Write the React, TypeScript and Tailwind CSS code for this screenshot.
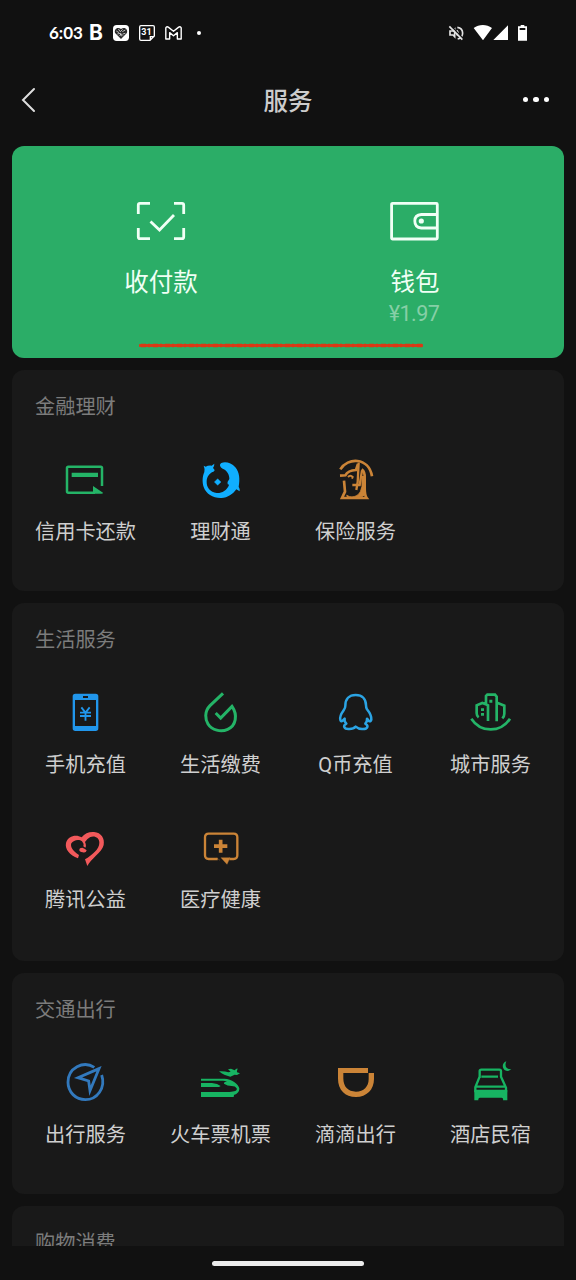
import type { ReactNode } from "react";

type Service = { label: string; viewBox: string; color: string; icon: ReactNode };

const finance: Service[] = [
  {
    label: "信用卡还款",
    viewBox: "123 48 144 144",
    color: "text-[#24b467]",
    icon: (
      <>
        <path d="M246 138V84q0-4-4-4H145q-4 0-4 4v70q0 4 4 4h80" fill="none" stroke="currentColor" strokeWidth="7.500" />
        <path d="M155 98h79v13h-79zM219 138l30 20q0 3-4 3h-26z" fill="currentColor" />
      </>
    ),
  },
  {
    label: "理财通",
    viewBox: "528 48 144 144",
    color: "text-[#10aeff]",
    icon: (
      <>
        <path
          d="M583 71L575 77Q564 76 557 80L551 77Q555 86 553 96C546 111 547 129 551 141C558 162 580 175 604 174C624 173 638 163 649 148L659 154Q660 146 656 140C660 120 659 97 646 82C634 68 616 64 604 69C596 74 601 83 610 87C622 93 628 105 628 117Q621 125 623 133Q627 134 627 135C620 152 605 160 590 159C571 157 559 143 560 124C560 111 568 99 580 95Q588 92 579 84Q583 80 583 71z"
          fill="currentColor"
        />
        <path d="M593 116L603 126L593 136L583 126z" fill="currentColor" stroke="currentColor" strokeWidth="1" />
      </>
    ),
  },
  {
    label: "保险服务",
    viewBox: "33 18 144 144",
    color: "text-[#cb8437]",
    icon: (
      <g fill="none" stroke="currentColor">
        <path d="M61 58C82 22 146 20 156 79" strokeWidth="8" />
        <path d="M60 77L76 76Q84 61 108 60L114 42" strokeWidth="8" />
        <path d="M116 38L113 96L109 120" strokeWidth="7" />
        <path d="M97 105H119L126 62" strokeWidth="7" />
        <path d="M125 58Q136 66 134 86V114Q134 136 140 144H66L75 125L72 92" strokeWidth="8" />
        <path d="M129 78V138" strokeWidth="9" />
        <path d="M80 135Q95 147 114 134Q122 127 125 112L128 140L82 143z" fill="currentColor" strokeWidth="2" />
        <path d="M84 81Q91 73 98 81L96 86" strokeWidth="6" />
      </g>
    ),
  },
];

const life: Service[] = [
  {
    label: "手机充值",
    viewBox: "123 27 144 144",
    color: "text-[#2196eb]",
    icon: (
      <>
        <path
          fillRule="evenodd"
          d="M166 41H227Q235 41 235 49V145Q235 153 227 153H166Q158 153 158 145V49Q158 41 166 41zM165 60V138H228V60zM189 48V54H204V48z"
          fill="currentColor"
        />
        <path d="M184 82L196.500 98L209 82M180 98H213M180 108H213M196.500 98V122" fill="none" stroke="currentColor" strokeWidth="5.500" />
      </>
    ),
  },
  {
    label: "生活缴费",
    viewBox: "528 27 144 144",
    color: "text-[#24b467]",
    icon: (
      <path
        d="M609 40L570 77C552 95 556 119 564 132C576 151 603 157 623 148C648 137 654 105 636 79L602 114L587 99"
        fill="none"
        stroke="currentColor"
        strokeWidth="9"
      />
    ),
  },
  {
    label: "Q币充值",
    viewBox: "123 27 144 144",
    color: "text-[#2ba4e4]",
    icon: (
      <path
        d="M197 45C177 45 166 58 166 77Q166 84 161 91C153 102 149 113 151 120Q153 127 158 122L164 116Q162 124 169 131C157 138 163 147 175 147Q190 148 197 140Q206 148 219 147C233 147 237 138 226 131Q232 124 231 116L236 122Q242 127 244 119C245 109 239 98 231 88Q228 83 228 76C228 57 217 45 197 45z"
        fill="none"
        stroke="currentColor"
        strokeWidth="7.500"
        strokeLinejoin="round"
      />
    ),
  },
  {
    label: "城市服务",
    viewBox: "528 27 144 144",
    color: "text-[#24b467]",
    icon: (
      <>
        <path d="M544 116C572 159 632 159 660 116" fill="none" stroke="currentColor" strokeWidth="8" />
        <path
          d="M566 112Q560 108 560 100V76L577 69L588 73V48L592 44H615L620 50V124M594 123V76L588 73M620 74L624 69L643 77V101Q643 109 637 115"
          fill="none"
          stroke="currentColor"
          strokeWidth="8"
        />
        <path d="M598 59h9v9h-9zM573 85h9v8h-9zM573 99h9v8h-9z" fill="currentColor" />
      </>
    ),
  },
  {
    label: "腾讯公益",
    viewBox: "123 12 144 144",
    color: "text-[#f2595b]",
    icon: (
      <>
        <path
          d="M202 138L195 118C217 104 238 88 238 68C238 52 223 46 211 51Q202 55 195 66Q200 78 196 83L190 79Q192 70 186 64C177 56 160 60 154 70C150 80 159 94 177 105L174 115C149 106 134 87 138 69C144 47 169 42 185 52C194 40 207 35 222 36C244 38 255 55 251 75C246 97 212 117 202 138z"
          fill="currentColor"
        />
        <path d="M178 90Q178 83 187 83Q194 85 200 91Q198 100 188 97Q178 96 178 90z" fill="currentColor" />
      </>
    ),
  },
  {
    label: "医疗健康",
    viewBox: "528 12 144 144",
    color: "text-[#cb8437]",
    icon: (
      <>
        <path d="M593 117H566Q555 117 555 106V52Q555 41 566 41H641Q652 41 652 52V106Q652 117 641 117H628" fill="none" stroke="currentColor" strokeWidth="7" />
        <path d="M602 59V98M582 78.500H622" stroke="currentColor" strokeWidth="11" />
        <path d="M590 114L600 121M603 113H630L621 133z" fill="currentColor" stroke="currentColor" strokeWidth="1" />
      </>
    ),
  },
];

const travel: Service[] = [
  {
    label: "出行服务",
    viewBox: "123 27 144 144",
    color: "text-[#3279bd]",
    icon: (
      <>
        <path d="M223 52C190 31 144 54 144 97C144 126 167 149 196 149C231 149 258 114 245 75" fill="none" stroke="currentColor" strokeWidth="8.500" />
        <path d="M237 56L174 83L206 93L210 122z" fill="none" stroke="currentColor" strokeWidth="8.500" />
      </>
    ),
  },
  {
    label: "火车票机票",
    viewBox: "528 27 144 144",
    color: "text-[#17b462]",
    icon: (
      <>
        <path
          d="M597 64Q614 63 625 67L632 65L624 58L633 56L644 61Q650 53 653 56Q650 63 651 67L660 70L651 75L644 74L631 80Q612 77 597 64z"
          fill="currentColor"
        />
        <path
          d="M543 86H613C635 87 655 101 658 115C658 127 650 133 642 135L641 141H543V126H628C644 125 652 123 650 115Q646 108 635 108Q622 108 612 101Q611 96 621 94L609 92H543z"
          fill="currentColor"
        />
        <path d="M543 99H576Q593 101 602 108L597 111H543z" fill="currentColor" />
      </>
    ),
  },
  {
    label: "滴滴出行",
    viewBox: "123 27 144 144",
    color: "text-[#cb8437]",
    icon: (
      <path
        d="M144 54H234V69H160V85C160 110 174 125 198 125C221 125 236 110 236 87V69H252V87C252 119 230 141 198 141C165 141 144 119 144 86z"
        fill="currentColor"
      />
    ),
  },
  {
    label: "酒店民宿",
    viewBox: "528 27 144 144",
    color: "text-[#17b462]",
    icon: (
      <>
        <path d="M574 80H624M569 84L569 63Q569 59 574 59H628Q633 59 633 64V80L648 113V123H556V112L569 80M556 110H648" fill="none" stroke="currentColor" strokeWidth="7" />
        <path d="M553 120H652V151H639Q641 143 634 143H570Q564 143 565 151H553z" fill="currentColor" />
        <path d="M649 34C636 38 635 54 645 61Q655 66 664 58C648 59 643 48 649 34z" fill="currentColor" />
      </>
    ),
  },
];

function Section({ title, services, height }: { title: string; services: Service[]; height: string }) {
  return (
    <section className={`shrink-0 rounded-xl bg-[#191919] ${height}`}>
      <h2 className="flex h-[72px] items-center pt-0.5 pl-[23px] text-[20.2px] text-[#7c7c7c]">{title}</h2>
      <div className="grid grid-cols-4 px-1.5">
        {services.map((s) => (
          <button key={s.label} className="flex h-[135px] flex-col items-center pt-3.5">
            <svg viewBox={s.viewBox} className={`mr-px size-12 shrink-0 ${s.color}`}>
              {s.icon}
            </svg>
            <span className="mt-3.5 text-[20.2px] leading-7 whitespace-nowrap text-[#cfcfcf]">{s.label}</span>
          </button>
        ))}
      </div>
    </section>
  );
}

function StatusBar() {
  return (
    <div className="flex h-[66px] shrink-0 items-center justify-between pr-[48px] pl-[49px] text-white">
      <div className="flex items-center">
        <span className="w-[40px] font-[Lato] text-[17px] leading-6 font-bold whitespace-nowrap">6:03</span>
        <span className="w-[24px] font-[Inter] text-[21px] leading-6 font-bold">B</span>
        <svg viewBox="0 0 48 48" className="size-4">
          <rect width="48" height="48" rx="11" fill="white" />
          <path d="M24 42L7 25C1 14 13 3 24 12C35 3 47 14 41 25z" fill="#292929" />
          <path d="M10 18l8 5M16 12l6 8 7-7M28 20l9-5M13 27l9-2 4 9M29 27l8-2M20 33l4-7 6 6" stroke="white" strokeWidth="2" fill="none" />
        </svg>
        <span className="relative ml-2.5 flex size-4 items-center justify-center">
          <svg viewBox="0 0 48 48" className="absolute inset-0 size-4">
            <path d="M6 2H42Q46 2 46 6V33L33 46H6Q2 46 2 42V6Q2 2 6 2zM34 46V35H46" fill="none" stroke="white" strokeWidth="4" />
          </svg>
          <span className="pr-px pb-px font-[Roboto] text-[9px] leading-none font-bold">31</span>
        </span>
        <svg viewBox="0 0 48 40" className="ml-[10px] h-[14px] w-[17px]">
          <path
            d="M2 5Q5 0 10 4L24 15L38 4Q43 0 46 5V37H35V19L24 28L13 19V37H2z"
            fill="none"
            stroke="white"
            strokeWidth="4"
            strokeLinejoin="round"
          />
        </svg>
        <span className="ml-[15px] size-1 rounded-full bg-white" />
      </div>
      <svg viewBox="480 72 240 54" className="h-[18px] w-20" fill="white">
        <path d="M486 93H495L500 88V110L495 105H486zM506 91Q514 99 506 106M508 82C529 85 529 112 509 117" fill="none" stroke="#e4e4e4" strokeWidth="5" />
        <path d="M487 76L526 116" stroke="#111" strokeWidth="4" />
        <path d="M484 79L523 119" stroke="#e4e4e4" strokeWidth="5" />
        <path d="M557 84C573 72 596 72 612 84L585 121zM660 76V120H616z" />
        <path fillRule="evenodd" d="M698 75H709V79H717V122H690V79H698zM695 84V90H712V84z" />
      </svg>
    </div>
  );
}

export default function App() {
  return (
    <div className="flex h-[1280px] w-[576px] flex-col overflow-hidden bg-[#111111] font-[Roboto,'Noto_Sans_CJK_SC',sans-serif]">
      <StatusBar />
      <header className="grid h-20 shrink-0 grid-cols-3 items-center px-[20px] pb-[13px]">
        <svg viewBox="0 0 16 26" className="h-[26px] w-4">
          <path d="M14 2L3 13L14 24" fill="none" stroke="#dedede" strokeWidth="2" strokeLinecap="round" />
        </svg>
        <h1 className="pt-[5px] text-center text-[24.5px] leading-8 font-medium text-[#cccccc]">服务</h1>
        <div className="flex justify-end gap-[5px] pr-[7px]">
          <span className="size-[5.5px] rounded-full bg-white" />
          <span className="size-[5.5px] rounded-full bg-white" />
          <span className="size-[5.5px] rounded-full bg-white" />
        </div>
      </header>
      <main className="flex h-[1100px] shrink-0 flex-col gap-3 overflow-hidden px-3">
        <section className="flex h-[212px] shrink-0 flex-col rounded-xl bg-[#2bad67] text-[#f0fff5]">
          <div className="grid h-[194px] grid-cols-2 px-[22px]">
            <button className="flex flex-col items-center pt-[55px]">
              <svg viewBox="0 0 50 40" className="h-10 w-[50px]" fill="none" stroke="currentColor" strokeWidth="2.800">
                <path d="M2.300 13V4Q2.300 2.300 4 2.300H14M38 2.300H46Q47.700 2.300 47.700 4V13M2.300 27V36Q2.300 37.700 4 37.700H14M38 37.700H46Q47.700 37.700 47.700 36V27M14.500 20.500L23.500 29L38 14" />
              </svg>
              <span className="mt-[24px] text-[24.5px] leading-9">收付款</span>
            </button>
            <button className="flex flex-col items-center pt-[55px]">
              <svg viewBox="0.700 0 50 40" className="h-10 w-[50px]" fill="none" stroke="currentColor" strokeWidth="2.800">
                <rect x="2.300" y="2.300" width="45.700" height="35.700" rx="1" />
                <path d="M48 13.500H32Q25.500 14 25.500 20Q25.500 26.500 32 27H48" />
                <circle cx="32" cy="20" r="2.600" fill="currentColor" stroke="none" />
              </svg>
              <span className="mt-[24px] text-[24.5px] leading-9">钱包</span>
              <span className="-mt-px mr-[2px] text-[21.5px] leading-7 font-normal tracking-[-0.5px] text-[#86cfa6]">¥1.97</span>
            </button>
          </div>
          <svg viewBox="0 0 284 10" className="ml-[127px] h-2.5 w-[284px]">
            <path d="M1 5.500H283" stroke="#d23e1a" strokeWidth="3" strokeLinecap="round" />
            <path d="M2 5.500H283" stroke="#dc3814" strokeWidth="3.400" strokeDasharray="5 2 2 3" />
          </svg>
        </section>
        <Section title="金融理财" services={finance} height="h-[221px]" />
        <Section title="生活服务" services={life} height="h-[358px]" />
        <Section title="交通出行" services={travel} height="h-[221px]" />
        <Section title="购物消费" services={[]} height="h-[221px]" />
      </main>
      <div className="flex h-[34px] shrink-0 items-center justify-center">
        <div className="h-[5px] w-[152px] rounded-full bg-[#ececec]" />
      </div>
    </div>
  );
}
